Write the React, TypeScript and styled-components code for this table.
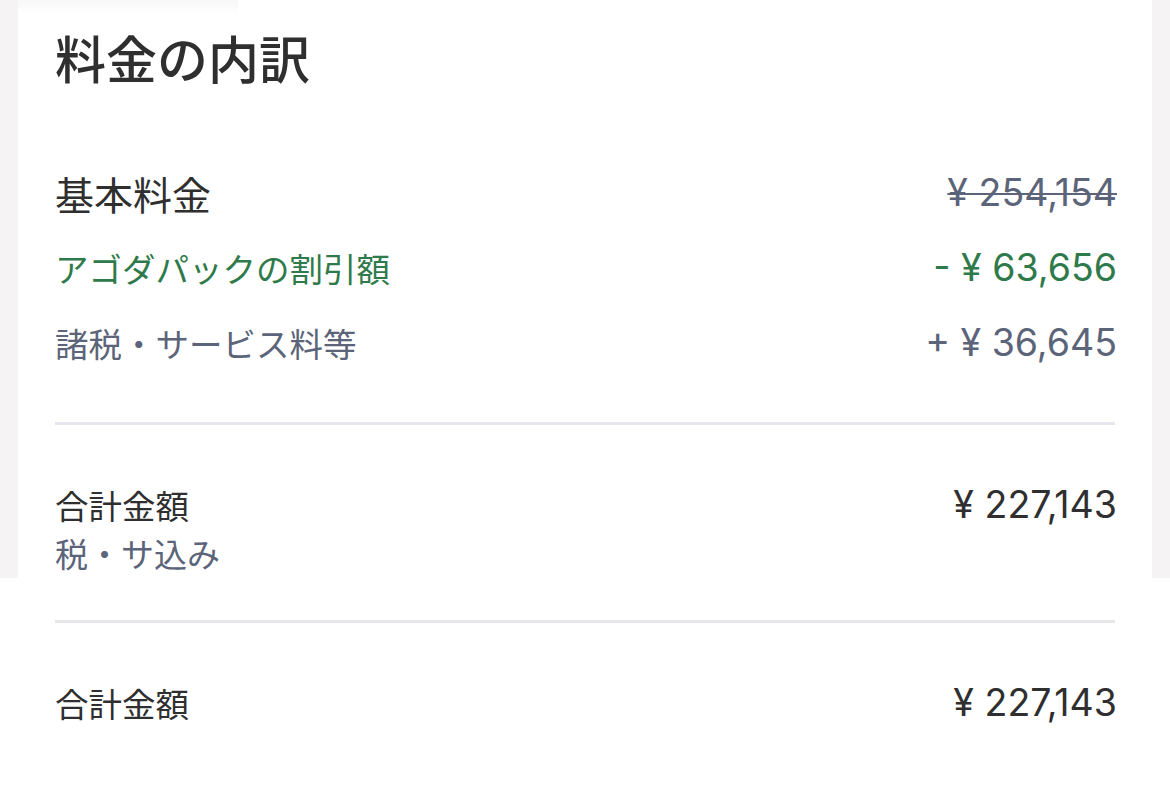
import styled, { createGlobalStyle, css } from "styled-components";

const GlobalStyle = createGlobalStyle`
  body {
    margin: 0;
    background: #fff;
    font-family: "Noto Sans CJK JP", "Noto Sans", sans-serif;
    -webkit-font-smoothing: antialiased;
  }
`;

type Tone = "dark" | "green" | "muted";

const toneColor: Record<Tone, string> = {
  dark: "#2f2f2f",
  green: "#2f7a4a",
  muted: "#5b6478",
};

const Page = styled.div`
  width: 1170px;
  height: 810px;
  display: flex;
  flex-direction: column;
  overflow: hidden;
`;

const TopArea = styled.div`
  height: 578px;
  padding: 0 18px;
  background: #f5f3f4;
  display: flex;
`;

const Card = styled.section`
  flex: 1;
  position: relative;
  padding: 27px 37px 0;
  background: #fff;
  display: flex;
  flex-direction: column;

  &::before {
    content: "";
    position: absolute;
    left: 0;
    top: 0;
    width: 220px;
    height: 14px;
    background: linear-gradient(to bottom, rgba(0, 0, 0, 0.03), rgba(0, 0, 0, 0));
  }
`;

const Title = styled.h2`
  margin: 0 0 81px;
  font-size: 51px;
  line-height: 60px;
  font-weight: 500;
  color: #2f2f2f;
`;

const LineList = styled.div`
  display: flex;
  flex-direction: column;
  gap: 25px;
`;

const Row = styled.div`
  display: flex;
  justify-content: space-between;
  align-items: center;
  height: 50px;
`;

const Label = styled.span<{ $tone: Tone; $size: number }>`
  font-size: ${({ $size }) => $size}px;
  line-height: 50px;
  color: ${({ $tone }) => toneColor[$tone]};
`;

const Amount = styled.span<{ $tone: Tone; $struck?: boolean }>`
  font-family: "Inter", "Liberation Sans", sans-serif;
  font-size: 37.5px;
  line-height: 50px;
  margin-right: -2px;
  color: ${({ $tone }) => toneColor[$tone]};
  ${({ $struck }) =>
    $struck &&
    css`
      text-decoration: line-through;
      text-decoration-thickness: 2px;
    `}
`;

const Divider = styled.hr<{ $top: number }>`
  margin: ${({ $top }) => $top}px 0 55px;
  border: none;
  height: 3px;
  background: #e6e6ec;
`;

const Note = styled.div`
  margin-top: 3px;
  font-size: 33px;
  line-height: 40px;
  color: ${toneColor.muted};
`;

const BottomArea = styled.div`
  padding: 0 55px;
`;

const App = () => {
  return (
    <Page>
      <GlobalStyle />
      <TopArea>
        <Card>
          <Title>料金の内訳</Title>
          <LineList>
            <Row>
              <Label $tone="dark" $size={39}>基本料金</Label>
              <Amount $tone="muted" $struck>¥ 254,154</Amount>
            </Row>
            <Row>
              <Label $tone="green" $size={33.5}>アゴダパックの割引額</Label>
              <Amount $tone="green">- ¥ 63,656</Amount>
            </Row>
            <Row>
              <Label $tone="muted" $size={33.5}>諸税・サービス料等</Label>
              <Amount $tone="muted">+ ¥ 36,645</Amount>
            </Row>
          </LineList>
          <Divider $top={54} />
          <Row>
            <Label $tone="dark" $size={33.5}>合計金額</Label>
            <Amount $tone="dark">¥ 227,143</Amount>
          </Row>
          <Note>税・サ込み</Note>
        </Card>
      </TopArea>
      <BottomArea>
        <Divider $top={42} />
        <Row>
          <Label $tone="dark" $size={33.5}>合計金額</Label>
          <Amount $tone="dark">¥ 227,143</Amount>
        </Row>
      </BottomArea>
    </Page>
  );
};

export default App;
